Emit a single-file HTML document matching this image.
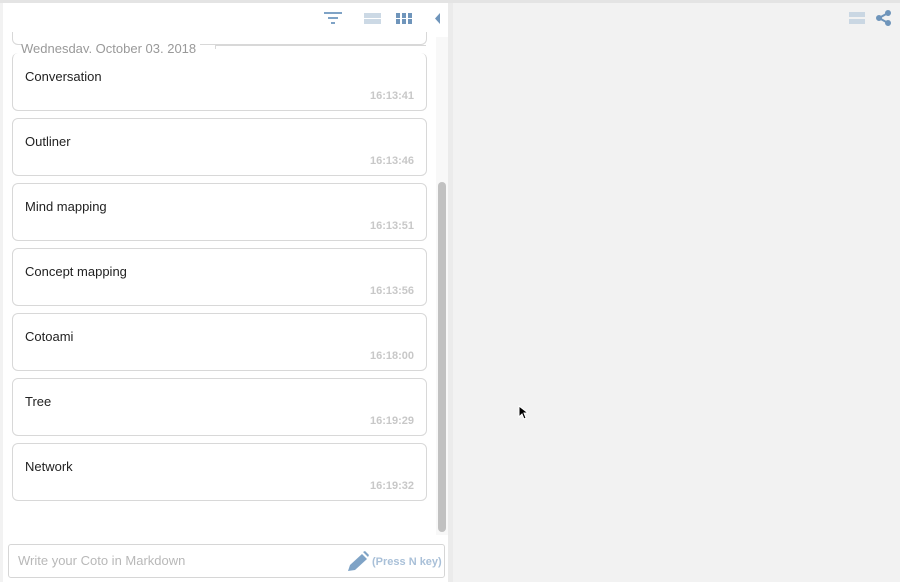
<!DOCTYPE html>
<html><head><style>
body{margin:0;width:900px;height:582px;background:#f2f2f2;font-family:"Liberation Sans",sans-serif;position:relative;overflow:hidden}
.top{position:absolute;left:0;top:0;width:900px;height:3px;background:#e4e4e4}
.left{position:absolute;left:3px;top:3px;width:445px;height:579px;background:#fff}
.edge{position:absolute;left:448px;top:3px;width:5px;height:579px;background:#ebebeb}
.card{position:absolute;left:12px;width:413px;height:56px;border:1px solid #d8d8d8;border-radius:6px;background:#fff}
.card .t{position:absolute;left:12px;top:15px;font-size:13px;color:#222}
.card .tm{position:absolute;right:12px;top:36px;font-size:11px;font-weight:bold;color:#c8c8c8}
.sb{position:absolute;left:438px;top:182px;width:8px;height:350px;background:#c1c1c1;border-radius:4px}
.sbt{position:absolute;left:436px;top:37px;width:12px;height:500px;background:#f8f8f8}
</style></head><body>
<div class="top"></div>
<div class="left"></div>
<div class="edge"></div>
<div class="sbt"></div><div class="sb"></div>
<svg style="position:absolute;left:324px;top:12px" width="18" height="12"><rect x="0" y="0" width="18" height="2" fill="#7fa3c6"/><rect x="4" y="5" width="10" height="2" fill="#7fa3c6"/><rect x="7" y="10" width="4" height="2" fill="#7fa3c6"/></svg>
<svg style="position:absolute;left:364px;top:13px" width="17" height="11"><rect width="17" height="5" fill="#ccd9e5"/><rect y="6" width="17" height="5" fill="#ccd9e5"/></svg>
<svg style="position:absolute;left:396px;top:13px" width="16" height="11"><g fill="#6f95bb"><rect width="4" height="5"/><rect x="6" width="4" height="5"/><rect x="12" width="4" height="5"/><rect y="6" width="4" height="5"/><rect x="6" y="6" width="4" height="5"/><rect x="12" y="6" width="4" height="5"/></g></svg>
<svg style="position:absolute;left:435px;top:13px" width="6" height="11"><path d="M5 0L0 5.5L5 11Z" fill="#6f95bb"/></svg>
<svg style="position:absolute;left:849px;top:12px" width="16" height="12"><rect width="16" height="5" fill="#cad7e3"/><rect y="7" width="16" height="5" fill="#cad7e3"/></svg>
<svg style="position:absolute;left:876px;top:10px" width="16" height="16"><g fill="#6f95bb" stroke="#6f95bb" stroke-width="2"><circle cx="12" cy="3" r="2"/><circle cx="3" cy="8" r="2"/><circle cx="12" cy="13" r="2"/><path d="M12 3L3 8L12 13" fill="none"/></g></svg>
<div style="position:absolute;left:12px;top:32px;width:413px;height:12px;border:1px solid #d8d8d8;border-top:none;border-radius:0 0 6px 6px"></div>
<div style="position:absolute;left:215px;top:45px;width:210px;height:3px;border:1px solid #d8d8d8;border-right:none;border-bottom:none;background:#fff"></div>
<div style="position:absolute;left:21px;top:41px;font-size:13px;color:#999;background:#fff;padding-right:4px">Wednesday, October 03, 2018</div>
<div class="card" style="top:53px;border-top:none;height:57px"><div class="t" style="top:16px">Conversation</div><div class="tm" style="top:37px">16:13:41</div></div>
<div class="card" style="top:118px"><div class="t">Outliner</div><div class="tm">16:13:46</div></div>
<div class="card" style="top:183px"><div class="t">Mind mapping</div><div class="tm">16:13:51</div></div>
<div class="card" style="top:248px"><div class="t">Concept mapping</div><div class="tm">16:13:56</div></div>
<div class="card" style="top:313px"><div class="t">Cotoami</div><div class="tm">16:18:00</div></div>
<div class="card" style="top:378px"><div class="t">Tree</div><div class="tm">16:19:29</div></div>
<div class="card" style="top:443px"><div class="t">Network</div><div class="tm">16:19:32</div></div>
<div style="position:absolute;left:3px;top:535px;width:445px;height:47px;background:#fff"></div>
<div style="position:absolute;left:8px;top:544px;width:435px;height:32px;border:1px solid #d6d6d6;border-radius:3px;background:#fff"></div>
<div style="position:absolute;left:18px;top:553px;font-size:13px;color:#b8b8b8">Write your Coto in Markdown</div>
<svg style="position:absolute;left:346px;top:551px" width="24" height="22"><path d="M2 20L4 14L16 3L21 8L9 19Z" fill="#7fa3c6"/><path d="M17 1L19 0L23 4L22 6Z" fill="#7fa3c6"/></svg>
<div style="position:absolute;left:372px;top:556px;font-size:11px;font-weight:bold;color:#a9c0d8">(Press N key)</div>
<svg style="position:absolute;left:518px;top:405px" width="10" height="15"><path d="M1 1L1 12L4 9L6 14L8 13L6 8L10 8Z" fill="#000" stroke="#fff" stroke-width="1"/></svg>
</body></html>
